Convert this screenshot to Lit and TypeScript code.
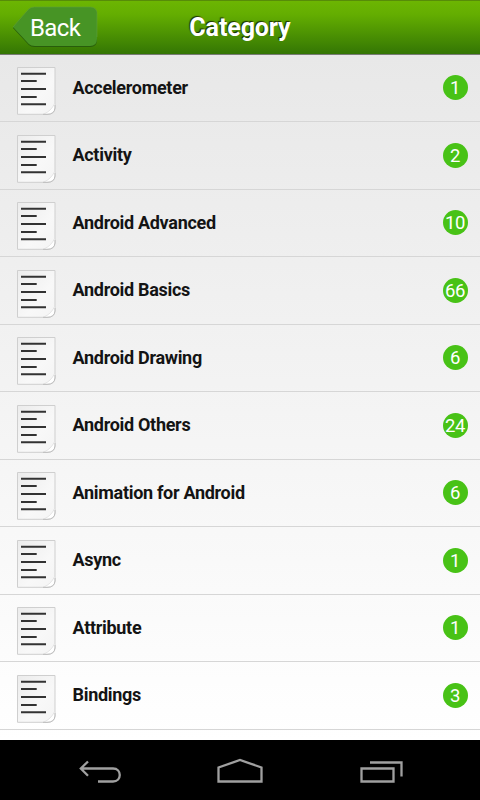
import { LitElement, html, css } from "lit";
import { customElement, property } from "lit/decorators.js";

const CATEGORIES: [string, number][] = [
  ["Accelerometer", 1],
  ["Activity", 2],
  ["Android Advanced", 10],
  ["Android Basics", 66],
  ["Android Drawing", 6],
  ["Android Others", 24],
  ["Animation for Android", 6],
  ["Async", 1],
  ["Attribute", 1],
  ["Bindings", 3],
];

@customElement("category-row")
class CategoryRow extends LitElement {
  @property() label = "";
  @property({ type: Number }) count = 0;

  static styles = css`
    :host {
      display: flex;
      align-items: center;
      box-sizing: border-box;
      height: 67.5px;
      padding: 0 12.5px 0 16px;
      border-bottom: 1px solid #d6d6d6;
    }
    .page {
      flex: none;
      width: 41px;
      height: 50px;
      margin: 7px 15.5px 0 0;
    }
    .label {
      flex: 1;
      font-size: 18px;
      font-weight: 700;
      letter-spacing: -0.3px;
      line-height: 24px;
      color: #141414;
      white-space: nowrap;
    }
    .badge {
      width: 25px;
      height: 25px;
      border-radius: 50%;
      background: #48c216;
      color: #fff;
      font-size: 18.5px;
      letter-spacing: -0.3px;
      line-height: 27px;
      text-align: center;
      white-space: nowrap;
    }
  `;

  render() {
    return html`
      <svg class="page" viewBox="0 0 41 50">
        <defs>
          <linearGradient id="paper" x1="0" y1="0" x2="1" y2="1">
            <stop offset="0" stop-color="#ececec" />
            <stop offset="0.6" stop-color="#f8f8f8" />
            <stop offset="1" stop-color="#f4f4f4" />
          </linearGradient>
        </defs>
        <path d="M1.500 1.500H39V42Q38.500 48.300 31 48.300H1.500Z" fill="url(#paper)" stroke="#cfcfcf" />
        <path d="M28 48Q35 45 38.700 37.500V42Q38.200 48 31 48Z" fill="#fff" />
        <path d="M28 48Q35 45 38.700 37.500" fill="none" stroke="#dedede" stroke-width=".8" />
        <path d="M39 39V42Q38.500 48.300 31 48.300H27" fill="none" stroke="#bdbdbd" />
        <path d="M5 7.700H30M5 15H20.700M5 23H30M5 31H20.700M5 38.300H30" stroke="#333" stroke-width="1.900" />
      </svg>
      <span class="label">${this.label}</span>
      <span class="badge">${this.count}</span>
    `;
  }
}

@customElement("app-root")
class AppRoot extends LitElement {
  static styles = css`
    :host {
      display: flex;
      flex-direction: column;
      height: 800px;
      overflow: hidden;
      font-family: Roboto, "Liberation Sans", sans-serif;
    }
    .header {
      flex: none;
      display: grid;
      grid-template-columns: 100px 1fr 100px;
      align-items: center;
      box-sizing: border-box;
      height: 54.5px;
      border-top: 1px solid #578c08;
      border-bottom: 1px solid #777b74;
      background: linear-gradient(#6cb502, #64ae01 25%, #347604);
    }
    .back {
      position: relative;
      width: 86px;
      height: 42px;
      margin: -1px 0 0 12px;
    }
    .shape {
      display: block;
      width: 86px;
      height: 42px;
    }
    .back-text {
      position: absolute;
      left: 18px;
      top: 7px;
      color: #fff;
      font-size: 24px;
      letter-spacing: -0.6px;
      line-height: 30px;
    }
    .title {
      padding-top: 1px;
      color: #fff;
      font-size: 25px;
      font-weight: 700;
      letter-spacing: -0.1px;
      line-height: 32px;
      text-align: center;
      text-shadow: -1px -1px 1px rgba(0, 0, 0, 0.7);
    }
    .list {
      flex: 1;
      min-height: 0;
      overflow: hidden;
      background: linear-gradient(#e8e8e8, #fff);
    }
    .nav {
      flex: none;
      height: 60px;
      background: #000;
      display: flex;
      justify-content: center;
      gap: 80px;
    }
    .nav-icon {
      width: 60px;
      height: 60px;
      fill: none;
      stroke: #a0a0a0;
      stroke-width: 2.3;
    }
  `;

  render() {
    return html`
      <header class="header">
        <div class="back">
          <svg class="shape" viewBox="0 0 87 42" preserveAspectRatio="none">
            <path d="M1 22L17 4Q19 2 23 2H79Q86 2 86 9V34Q86 41 79 41H23Q19 41 17 39Z" fill="#285d0b" />
            <path d="M1 21L17 3Q19 1 23 1H79Q86 1 86 8V33Q86 40 79 40H23Q19 40 17 38Z" fill="#479425" />
            <path d="M1 21L17 3Q19 1 23 1H79Q86 1 86 8V31" fill="none" stroke="#619f3b" stroke-width=".6" />
          </svg>
          <span class="back-text">Back</span>
        </div>
        <div class="title">Category</div>
      </header>
      <main class="list">
        ${CATEGORIES.map(
          ([label, count]) => html`<category-row .label=${label} .count=${count}></category-row>`
        )}
      </main>
      <nav class="nav">
        <svg class="nav-icon" viewBox="0 0 60 60">
          <path d="M10.500 28.500H43C52 28.500 52 41.500 43 41.500H28M18 21.500L10.800 28.500L18 35.800" />
        </svg>
        <svg class="nav-icon" viewBox="0 0 60 60">
          <path d="M8.500 41.500V27.500L30 20L51.500 27.500V41.500Z" />
        </svg>
        <svg class="nav-icon" viewBox="0 0 60 60">
          <path d="M11.500 28.500H43.500V41.500H11.500ZM20 22.500H51.500V36.500" />
        </svg>
      </nav>
    `;
  }
}
